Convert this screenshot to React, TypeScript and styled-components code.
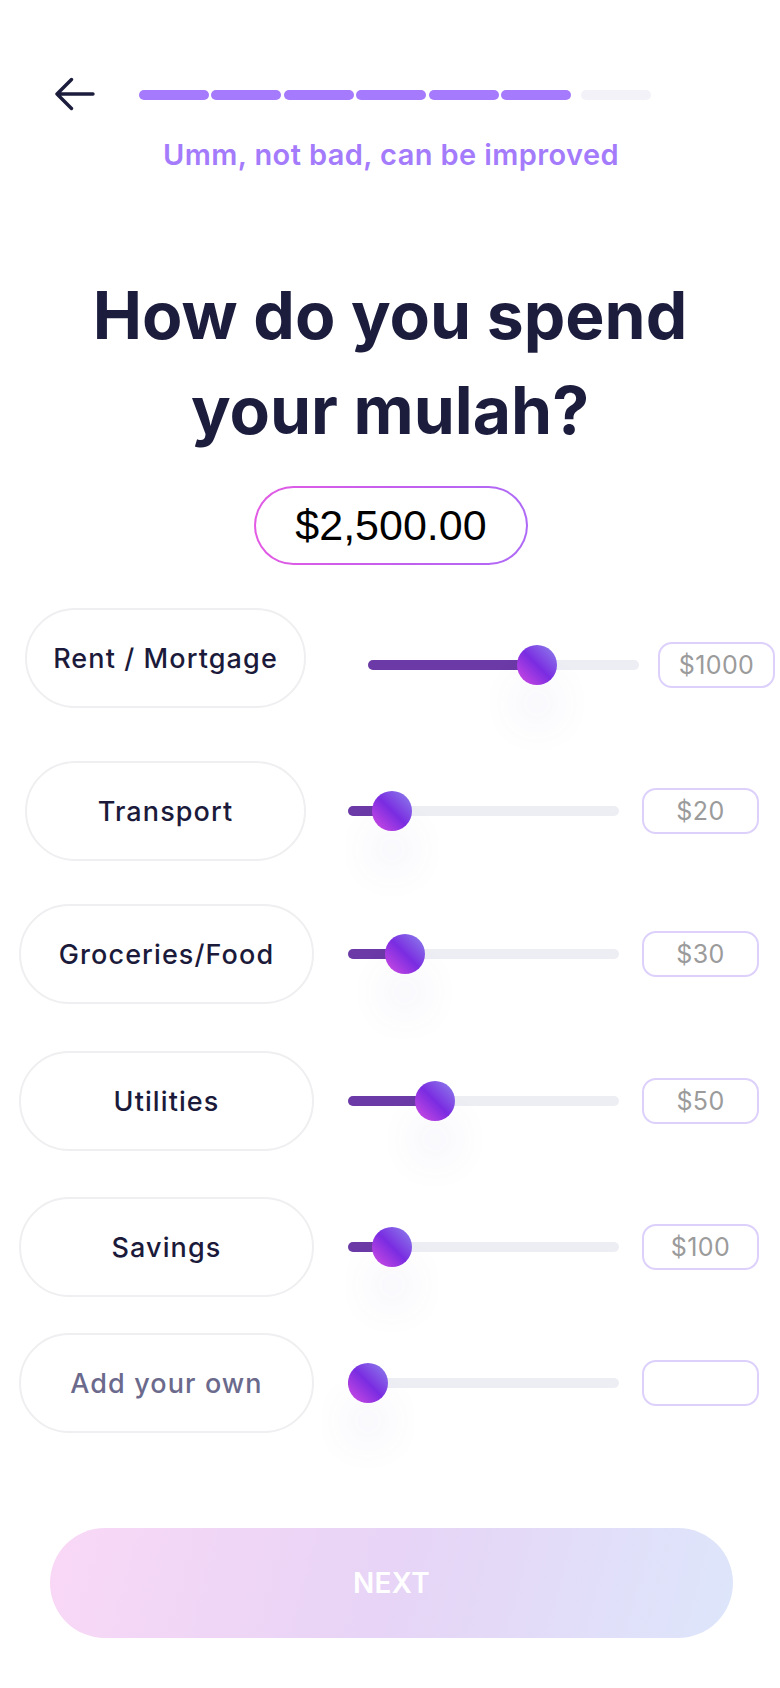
import React from "react";
import styled, { createGlobalStyle } from "styled-components";

const Global = createGlobalStyle`
  html, body { margin: 0; padding: 0; background: #ffffff; }
  body { font-family: Inter, "Open Sans", sans-serif; -webkit-font-smoothing: antialiased; }
  * { box-sizing: border-box; }
`;

const Page = styled.div`
  width: 780px;
  min-height: 1688px;
  background: #ffffff;
  display: flex;
  flex-direction: column;
`;

const Header = styled.div`
  display: flex;
  align-items: center;
  padding: 77px 0 0 55px;
  gap: 44px;
`;

const BackButton = styled.button`
  width: 40px;
  height: 34px;
  padding: 0;
  border: 0;
  background: transparent;
  display: flex;
  cursor: pointer;
`;

const Progress = styled.div`
  display: flex;
  align-items: center;
  gap: 2.4px;
  padding-top: 2px;
`;

const Segment = styled.div<{ $done: boolean }>`
  width: 70px;
  height: 10px;
  border-radius: 5px;
  background: ${(p) => (p.$done ? "#A57AFC" : "#F3F2F8")};
  margin-left: ${(p) => (p.$done ? 0 : 7.6)}px;
`;

const Subtitle = styled.div`
  margin-top: 26px;
  text-align: center;
  font-size: 29px;
  line-height: 36px;
  font-weight: 600;
  letter-spacing: 0.4px;
  color: #A47BFB;
  padding-left: 2px;
`;

const Title = styled.h1`
  margin: 95px 0 0;
  text-align: center;
  font-size: 66px;
  line-height: 95px;
  font-weight: 700;
  color: #1C1D3D;
  letter-spacing: 0;
`;

const TotalPill = styled.div`
  align-self: center;
  margin-top: 28px;
  margin-left: 2px;
  width: 274px;
  height: 79px;
  border-radius: 40px;
  border: 2px solid transparent;
  background: linear-gradient(#ffffff, #ffffff) padding-box,
    linear-gradient(90deg, #E35AE4 0%, #C55EEE 50%, #AE6AF6 100%) border-box;
  display: flex;
  align-items: center;
  justify-content: center;
  font-family: "Liberation Sans", Arial, sans-serif;
  font-size: 43px;
  color: #000000;
`;

const Row = styled.div<{ $mt: number; $indent: number }>`
  display: flex;
  align-items: center;
  height: 100px;
  margin-top: ${(p) => p.$mt}px;
  padding-left: ${(p) => p.$indent}px;
`;

const Label = styled.div<{ $w: number; $muted?: boolean }>`
  width: ${(p) => p.$w}px;
  height: 100px;
  flex-shrink: 0;
  border: 2px solid #EFEFF1;
  border-radius: 50px;
  display: flex;
  align-items: center;
  justify-content: center;
  font-size: 27px;
  font-weight: 500;
  letter-spacing: 1.1px;
  color: ${(p) => (p.$muted ? "#6B6A8C" : "#1B1A3A")};
  background: #ffffff;
`;

const Control = styled.div<{ $ml: number; $drop: number }>`
  display: flex;
  align-items: center;
  margin-left: ${(p) => p.$ml}px;
  padding-top: ${(p) => p.$drop}px;
`;

const Track = styled.div`
  position: relative;
  width: 271px;
  height: 10px;
  border-radius: 5px;
  background: #EDEDF4;
  flex-shrink: 0;
`;

const Fill = styled.div`
  position: absolute;
  left: 0;
  top: 0;
  bottom: 0;
  border-radius: 5px;
  background: #6C3AA6;
`;

const Thumb = styled.div`
  position: absolute;
  top: 50%;
  width: 40px;
  height: 40px;
  margin: -20px 0 0 -20px;
  border-radius: 50%;
  background: linear-gradient(225deg, #8E86EC 0%, #7A2CE1 50%, #D64DE3 100%);
  box-shadow: 0 38px 42px rgba(105, 85, 185, 0.09);
`;

const ValueBox = styled.div<{ $ml: number }>`
  margin-left: ${(p) => p.$ml}px;
  width: 117px;
  height: 46px;
  flex-shrink: 0;
  border: 2px solid #DDD1FC;
  border-radius: 14px;
  display: flex;
  align-items: center;
  justify-content: center;
  font-size: 25px;
  letter-spacing: 0.4px;
  color: #9B9B9B;
`;

const NextButton = styled.button`
  margin: 95px 0 0 50px;
  width: 683px;
  height: 110px;
  border: 0;
  border-radius: 55px;
  background: linear-gradient(105deg, #F9D8F6 0%, #E7D4F6 50%, #DDE6FB 100%);
  color: #ffffff;
  font-family: Inter, sans-serif;
  font-size: 28px;
  font-weight: 600;
  letter-spacing: 0.3px;
  cursor: pointer;
`;

type Item = {
  label: string;
  value: string;
  pos: number;
  mt: number;
  indent: number;
  w: number;
  ml: number;
  boxMl: number;
  drop: number;
  muted?: boolean;
};

const items: Item[] = [
  { label: "Rent / Mortgage", value: "$1000", pos: 169, mt: 43, indent: 25, w: 281, ml: 62, boxMl: 19, drop: 13 },
  { label: "Transport", value: "$20", pos: 44, mt: 53, indent: 25, w: 281, ml: 42, boxMl: 23, drop: 0 },
  { label: "Groceries/Food", value: "$30", pos: 57, mt: 43, indent: 19, w: 295, ml: 34, boxMl: 23, drop: 0 },
  { label: "Utilities", value: "$50", pos: 87, mt: 47, indent: 19, w: 295, ml: 34, boxMl: 23, drop: 0 },
  { label: "Savings", value: "$100", pos: 44, mt: 46, indent: 19, w: 295, ml: 34, boxMl: 23, drop: 0 },
  { label: "Add your own", value: "", pos: 20, mt: 36, indent: 19, w: 295, ml: 34, boxMl: 23, drop: 0, muted: true },
];

const BackArrow = () => (
  <svg width="40" height="34" viewBox="0 0 40 34" fill="none">
    <path
      d="M2 17 H38 M16.5 2.5 L2 17 L16.5 31.5"
      stroke="#1C1D3D"
      strokeWidth="3.4"
      strokeLinecap="round"
      strokeLinejoin="round"
    />
  </svg>
);

export default function App() {
  return (
    <Page>
      <Global />
      <Header>
        <BackButton aria-label="Back">
          <BackArrow />
        </BackButton>
        <Progress>
          {[0, 1, 2, 3, 4, 5, 6].map((i) => (
            <Segment key={i} $done={i < 6} />
          ))}
        </Progress>
      </Header>
      <Subtitle>Umm, not bad, can be improved</Subtitle>
      <Title>
        How do you spend
        <br />
        your mulah?
      </Title>
      <TotalPill>$2,500.00</TotalPill>
      {items.map((it) => (
        <Row key={it.label} $mt={it.mt} $indent={it.indent}>
          <Label $w={it.w} $muted={it.muted}>
            {it.label}
          </Label>
          <Control $ml={it.ml} $drop={it.drop}>
            <Track>
              <Fill style={{ width: it.pos }} />
              <Thumb style={{ left: it.pos }} />
            </Track>
            <ValueBox $ml={it.boxMl}>{it.value}</ValueBox>
          </Control>
        </Row>
      ))}
      <NextButton>NEXT</NextButton>
    </Page>
  );
}
